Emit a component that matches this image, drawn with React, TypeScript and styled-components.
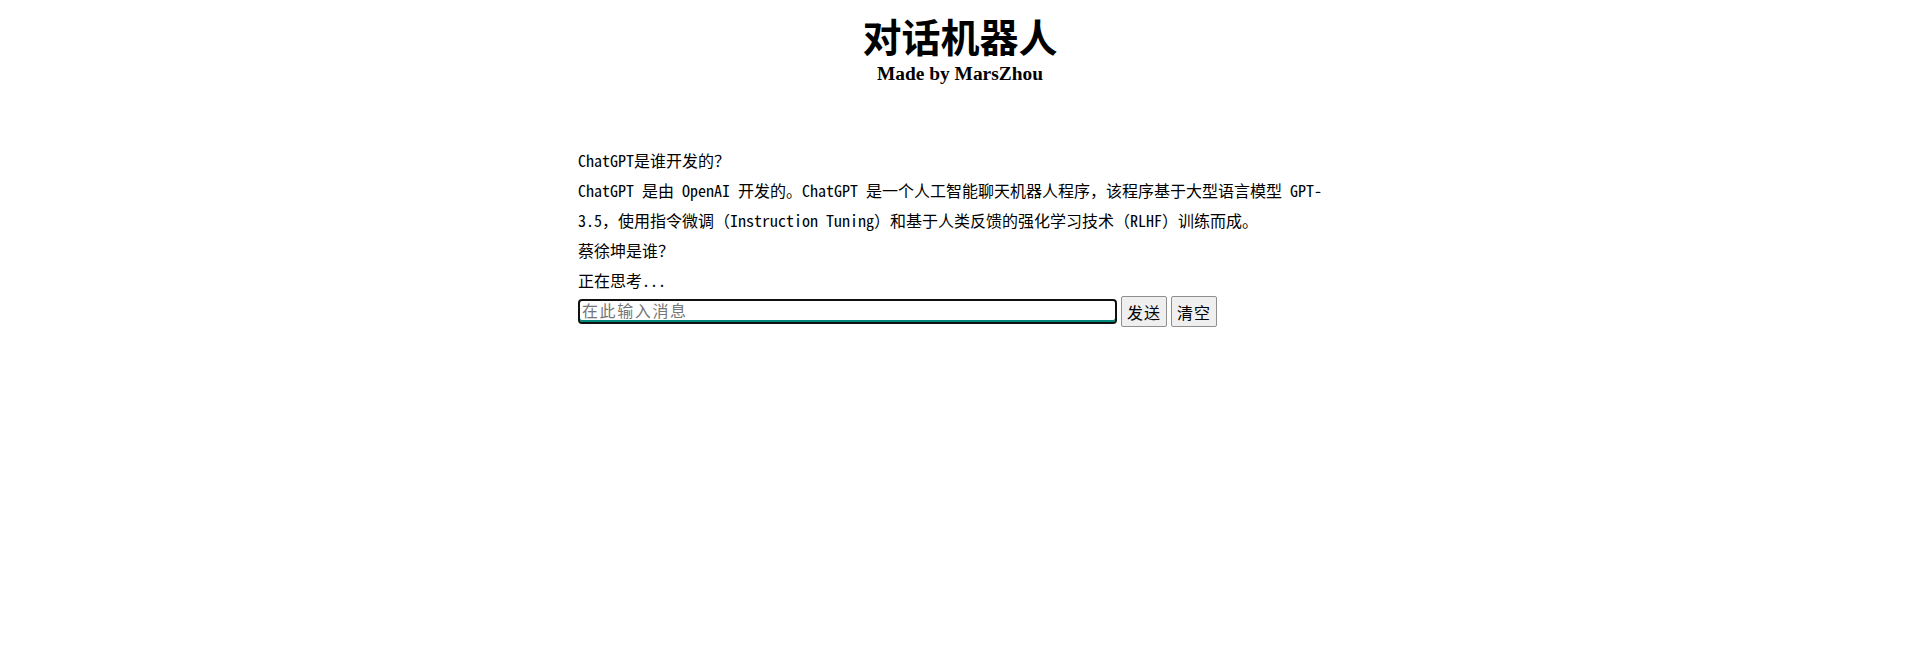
import React from "react";
import styled, { createGlobalStyle } from "styled-components";

const Global = createGlobalStyle`
  html, body { margin: 0; padding: 0; background: #fff; }
  body { font-family: "Liberation Serif", "Noto Sans CJK SC", serif; color: #000; }
`;

const Page = styled.div`
  display: flex;
  flex-direction: column;
  align-items: center;
  width: 1920px;
  min-height: 672px;
`;

const Title = styled.h1`
  margin: 15px 0 0;
  font-family: "Noto Sans CJK SC", sans-serif;
  font-weight: 700;
  font-size: 39px;
  line-height: 40px;
`;

const Subtitle = styled.div`
  margin-top: 8px;
  font-family: "Liberation Serif", serif;
  font-weight: 700;
  font-size: 19.4px;
  line-height: 22px;
`;

const Chat = styled.div`
  width: 764px;
  margin-top: 60px;
  display: flex;
  flex-direction: column;
`;

const Line = styled.div`
  font-family: "Noto Sans Mono CJK SC", "Noto Sans CJK SC", monospace;
  font-size: 16px;
  line-height: 30px;
`;

const InputRow = styled.div`
  display: flex;
  align-items: center;
  gap: 4px;
  margin-top: 1px;
  height: 31px;
`;

const Input = styled.input`
  box-sizing: border-box;
  width: 539px;
  height: 25px;
  border: 2px solid #111;
  border-radius: 4px;
  box-shadow: inset 0 -2px 0 #00897b;
  padding: 0 2px 4px;
  font-family: "Noto Sans CJK SC", sans-serif;
  font-size: 16px;
  line-height: 18px;
  letter-spacing: 1.6px;
  outline: none;
  &::placeholder { color: #767676; }
`;

const Button = styled.button`
  box-sizing: border-box;
  height: 31px;
  width: 46px;
  padding: 0;
  border: 1px solid #8f8f8f;
  border-radius: 2px;
  background: #efefef;
  font-family: "Noto Sans CJK SC", sans-serif;
  font-size: 16px;
  letter-spacing: 1px;
  color: #000;
`;

export default function App() {
  return (
    <Page>
      <Global />
      <Title>对话机器人</Title>
      <Subtitle>Made by MarsZhou</Subtitle>
      <Chat>
        <Line>ChatGPT是谁开发的？</Line>
        <Line>
          ChatGPT 是由 OpenAI 开发的。ChatGPT 是一个人工智能聊天机器人程序，该程序基于大型语言模型 GPT-3.5，使用指令微调（Instruction Tuning）和基于人类反馈的强化学习技术（RLHF）训练而成。
        </Line>
        <Line>蔡徐坤是谁？</Line>
        <Line>正在思考...</Line>
        <InputRow>
          <Input placeholder="在此输入消息" />
          <Button>发送</Button>
          <Button>清空</Button>
        </InputRow>
      </Chat>
    </Page>
  );
}
